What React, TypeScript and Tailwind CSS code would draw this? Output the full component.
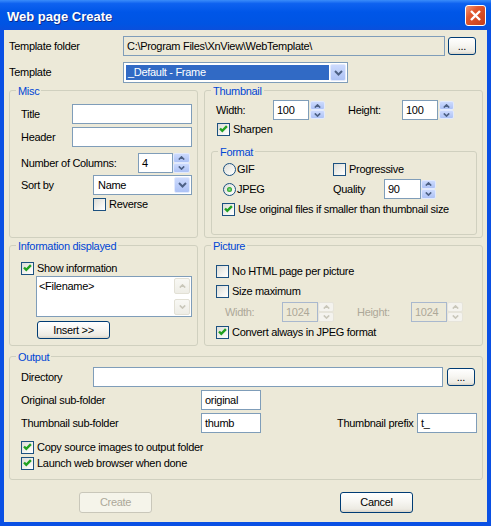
import React from "react";

type Kids = { className?: string; children?: React.ReactNode };

function Check({ checked, className = "" }: { checked?: boolean; className?: string }) {
  return (
    <span
      className={`w-[13px] h-[13px] shrink-0 border border-[#1C5180] bg-[linear-gradient(135deg,#DCDCD7_0%,#F3F3EF_60%,#FFFFFF_100%)] flex items-center justify-center ${className}`}
    >
      {checked && (
        <svg width="11" height="11" viewBox="0 0 11 11">
          <path d="M2 4.5 L4.3 6.9 L8.9 2.2" fill="none" stroke="#21A121" strokeWidth="2.4" />
        </svg>
      )}
    </span>
  );
}

function CheckRow({ checked, label, className = "" }: { checked?: boolean; label: string; className?: string }) {
  return (
    <div className={`flex items-center h-[13px] ${className}`}>
      <Check checked={checked} />
      <span className="ml-[3px] whitespace-nowrap">{label}</span>
    </div>
  );
}

function Radio({ checked }: { checked?: boolean }) {
  return (
    <span className="w-[13px] h-[13px] shrink-0 rounded-full border border-[#1C5180] bg-[linear-gradient(135deg,#DCDCD7_0%,#F3F3EF_60%,#FFFFFF_100%)] flex items-center justify-center">
      {checked && <span className="w-[5px] h-[5px] rounded-full bg-[radial-gradient(circle,#8FE08F_0%,#21A121_70%)]" />}
    </span>
  );
}

function Arrow({ up, color }: { up?: boolean; color: string }) {
  return (
    <svg width="7" height="4" viewBox="0 0 7 4">
      <path
        d={up ? "M0.8 3.6 L3.5 0.9 L6.2 3.6" : "M0.8 0.4 L3.5 3.1 L6.2 0.4"}
        fill="none"
        stroke={color}
        strokeWidth="1.6"
      />
    </svg>
  );
}

function Spin({ className = "", disabled }: { className?: string; disabled?: boolean }) {
  const half = disabled
    ? "border-[#E6E4DA] bg-[#F4F3EE]"
    : "border-[#E2EAFD] bg-[linear-gradient(to_bottom,#CCDAFD,#ADC2F5)]";
  const col = disabled ? "#C9C7BA" : "#4D6185";
  return (
    <div className={`flex flex-col shrink-0 ${className}`}>
      <div className={`flex-1 rounded-[2px] border flex items-center justify-center ${half}`}>
        <Arrow up color={col} />
      </div>
      <div className={`flex-1 rounded-[2px] border flex items-center justify-center ${half}`}>
        <Arrow color={col} />
      </div>
    </div>
  );
}

function DropBtn({ className = "" }: { className?: string }) {
  return (
    <div
      className={`shrink-0 rounded-[2px] border border-[#E2EAFD] bg-[linear-gradient(to_bottom,#CCDAFD,#ADC2F5)] flex items-center justify-center ${className}`}
    >
      <svg width="9" height="6" viewBox="0 0 9 6">
        <path d="M1 1 L4.5 4.5 L8 1" fill="none" stroke="#4D6185" strokeWidth="2" />
      </svg>
    </div>
  );
}

function Field({
  className = "",
  value = "",
  disabled,
  readOnly,
}: {
  className?: string;
  value?: string;
  disabled?: boolean;
  readOnly?: boolean;
}) {
  const look = disabled
    ? "border-[#A9B8CE] bg-[#ECE9D8] text-[#ACA899]"
    : readOnly
    ? "border-[#7F9DB9] bg-[#ECE9D8]"
    : "border-[#7F9DB9] bg-white";
  return (
    <div
      className={`h-[20px] shrink-0 border flex items-center pl-[3px] whitespace-nowrap overflow-hidden ${look} ${className}`}
    >
      {value}
    </div>
  );
}

function Combo({ className = "", value }: { className?: string; value: string }) {
  return (
    <div className={`h-[20px] shrink-0 border border-[#7F9DB9] bg-white flex p-[1px] ${className}`}>
      <div className="flex-1 flex items-center pl-[3px]">{value}</div>
      <DropBtn className="w-[16px]" />
    </div>
  );
}

function Btn({ children, className = "", disabled }: Kids & { disabled?: boolean }) {
  const look = disabled
    ? "border-[#C9C7BA] bg-[#F5F4EA] text-[#ACA899]"
    : "border-[#003C74] bg-[linear-gradient(to_bottom,#FFFFFF_0%,#F7F6F2_45%,#ECEAE2_85%,#D9D4C8_100%)]";
  return (
    <button
      type="button"
      className={`shrink-0 rounded-[3px] border flex items-center justify-center ${look} ${className}`}
    >
      {children}
    </button>
  );
}

function Group({ title, className = "", children }: Kids & { title: string }) {
  return (
    <div className={`relative shrink-0 border border-[#D0D0BF] rounded-[3px] flex flex-col ${className}`}>
      <span className="absolute left-[6px] top-[-7px] px-[2px] bg-[#ECE9D8] text-[#0046D5] leading-[14px] whitespace-nowrap">
        {title}
      </span>
      {children}
    </div>
  );
}

function ScrollBtn({ up }: { up?: boolean }) {
  return (
    <div className="w-[16px] h-[16px] rounded-[2px] border border-[#E2E0D5] bg-[linear-gradient(to_bottom,#F8F8F4,#EEEDE6)] flex items-center justify-center">
      <Arrow up={up} color="#C9C7BA" />
    </div>
  );
}

export default function App() {
  return (
    <div className="w-[491px] h-[526px] flex flex-col bg-[#0A50E4] overflow-hidden font-['Liberation_Sans',Tahoma,Arial,sans-serif] text-[11px] leading-[13px] tracking-[-0.3px] text-black">
      {/* Title bar */}
      <div className="h-[30px] shrink-0 flex items-start justify-between pl-[7px] pr-[5px] bg-[linear-gradient(to_bottom,#3A8CFA_0%,#0E62F0_12%,#0056E8_40%,#0054E3_80%,#0A4FDC_100%)]">
        <span className="mt-[9px] text-white font-bold text-[13px] leading-[15px] tracking-normal [text-shadow:1px_1px_0_#0B2A8C]">
          Web page Create
        </span>
        <div className="mt-[5px] w-[21px] h-[21px] rounded-[3px] border border-white bg-[linear-gradient(135deg,#F29A7A_0%,#E2582F_35%,#C43D19_100%)] flex items-center justify-center">
          <svg width="13" height="13" viewBox="0 0 13 13">
            <path d="M2 2 L11 11 M11 2 L2 11" stroke="white" strokeWidth="2.4" />
          </svg>
        </div>
      </div>

      {/* Client area */}
      <div className="flex-1 mx-[4px] mb-[4px] bg-[#ECE9D8] flex flex-col pl-[5px] pt-[6px]">
        {/* Template folder */}
        <div className="flex items-center h-[20px] shrink-0">
          <span className="w-[114px] shrink-0">Template folder</span>
          <Field className="w-[322px]" readOnly value={"C:\\Program Files\\XnView\\WebTemplate\\"} />
          <Btn className="ml-[3px] w-[28px] h-[18px]">...</Btn>
        </div>

        {/* Template */}
        <div className="flex items-center h-[21px] mt-[6px] shrink-0">
          <span className="w-[114px] shrink-0">Template</span>
          <div className="w-[225px] h-[21px] border border-[#7F9DB9] bg-white flex p-[1px]">
            <div className="flex-1 m-[1px] bg-[#316AC5] text-white flex items-center pl-[2px]">_Default - Frame</div>
            <DropBtn className="w-[16px]" />
          </div>
        </div>

        {/* Misc + Thumbnail */}
        <div className="flex gap-[6px] mt-[7px] h-[148px] shrink-0">
          <Group title="Misc" className="w-[189px] h-[148px]">
            <div className="flex items-center h-[20px] mt-[13px] ml-[11px]">
              <span className="w-[51px]">Title</span>
              <Field className="w-[120px]" />
            </div>
            <div className="flex items-center h-[20px] mt-[3px] ml-[11px]">
              <span className="w-[51px]">Header</span>
              <Field className="w-[120px]" />
            </div>
            <div className="flex items-center h-[20px] mt-[6px] ml-[11px]">
              <span className="w-[117px] whitespace-nowrap">Number of Columns:</span>
              <Field className="w-[35px]" value="4" />
              <Spin className="w-[17px] h-[20px]" />
            </div>
            <div className="flex items-center h-[20px] mt-[2px] ml-[11px]">
              <span className="w-[72px]">Sort by</span>
              <Combo className="w-[99px]" value="Name" />
            </div>
            <CheckRow className="mt-[3px] ml-[83px]" label="Reverse" />
          </Group>

          <Group title="Thumbnail" className="w-[279px] h-[148px]">
            <div className="flex items-center h-[20px] mt-[9px] ml-[11px]">
              <span className="w-[57px]">Width:</span>
              <Field className="w-[36px]" value="100" />
              <Spin className="ml-[1px] w-[15px] h-[18px]" />
              <span className="ml-[23px] w-[54px]">Height:</span>
              <Field className="w-[36px]" value="100" />
              <Spin className="ml-[1px] w-[15px] h-[18px]" />
            </div>
            <CheckRow className="mt-[3px] ml-[12px]" checked label="Sharpen" />
            <Group title="Format" className="mt-[15px] ml-[6px] w-[266px] h-[84px]">
              <div className="flex items-center h-[13px] mt-[11px] ml-[11px]">
                <div className="w-[110px] flex items-center">
                  <Radio />
                  <span className="ml-[1px]">GIF</span>
                </div>
                <Check />
                <span className="ml-[3px]">Progressive</span>
              </div>
              <div className="flex items-center h-[20px] mt-[3px] ml-[11px]">
                <div className="w-[110px] flex items-center">
                  <Radio checked />
                  <span className="ml-[1px]">JPEG</span>
                </div>
                <span className="w-[51px]">Quality</span>
                <Field className="w-[37px]" value="90" />
                <Spin className="w-[15px] h-[19px]" />
              </div>
              <CheckRow className="mt-[4px] ml-[10px]" checked label="Use original files if smaller than thumbnail size" />
            </Group>
          </Group>
        </div>

        {/* Information displayed + Picture */}
        <div className="flex gap-[6px] mt-[7px] h-[101px] shrink-0">
          <Group title="Information displayed" className="w-[189px] h-[101px]">
            <CheckRow className="mt-[16px] ml-[11px]" checked label="Show information" />
            <div className="mt-[1px] ml-[26px] w-[156px] h-[41px] border border-[#7F9DB9] bg-white flex">
              <div className="flex-1 pl-[2px] pt-[3px]">&lt;Filename&gt;</div>
              <div className="w-[17px] flex flex-col justify-between py-[1px]">
                <ScrollBtn up />
                <ScrollBtn />
              </div>
            </div>
            <Btn className="mt-[4px] ml-[27px] w-[73px] h-[18px]">Insert &gt;&gt;</Btn>
          </Group>

          <Group title="Picture" className="w-[279px] h-[101px]">
            <CheckRow className="mt-[19px] ml-[11px]" label="No HTML page per picture" />
            <CheckRow className="mt-[7px] ml-[11px]" label="Size maximum" />
            <div className="flex items-center h-[20px] mt-[4px] ml-[20px] text-[#ACA899]">
              <span className="w-[57px]">Width:</span>
              <Field className="w-[36px]" disabled value="1024" />
              <Spin disabled className="w-[16px] h-[20px]" />
              <span className="ml-[23px] w-[54px]">Height:</span>
              <Field className="w-[36px]" disabled value="1024" />
              <Spin disabled className="w-[16px] h-[20px]" />
            </div>
            <CheckRow className="mt-[4px] ml-[11px]" checked label="Convert always in JPEG format" />
          </Group>
        </div>

        {/* Output */}
        <Group title="Output" className="mt-[10px] w-[474px] h-[124px]">
          <div className="flex items-center h-[20px] mt-[10px] ml-[11px]">
            <span className="w-[72px]">Directory</span>
            <Field className="w-[350px]" />
            <Btn className="ml-[4px] w-[28px] h-[18px]">...</Btn>
          </div>
          <div className="flex items-center h-[20px] mt-[3px] ml-[11px]">
            <span className="w-[180px]">Original sub-folder</span>
            <Field className="w-[60px]" value="original" />
          </div>
          <div className="flex items-center h-[20px] mt-[3px] ml-[11px]">
            <span className="w-[180px]">Thumbnail sub-folder</span>
            <Field className="w-[60px]" value="thumb" />
            <span className="ml-[76px] w-[80px] whitespace-nowrap">Thumbnail prefix</span>
            <Field className="w-[60px]" value="t_" />
          </div>
          <CheckRow className="mt-[8px] ml-[11px]" checked label="Copy source images to output folder" />
          <CheckRow className="mt-[3px] ml-[11px]" checked label="Launch web browser when done" />
        </Group>

        {/* Buttons */}
        <div className="flex items-center h-[21px] mt-[12px] shrink-0">
          <Btn disabled className="ml-[70px] w-[73px] h-[21px]">
            Create
          </Btn>
          <Btn className="ml-[188px] w-[73px] h-[21px]">Cancel</Btn>
        </div>
      </div>
    </div>
  );
}
